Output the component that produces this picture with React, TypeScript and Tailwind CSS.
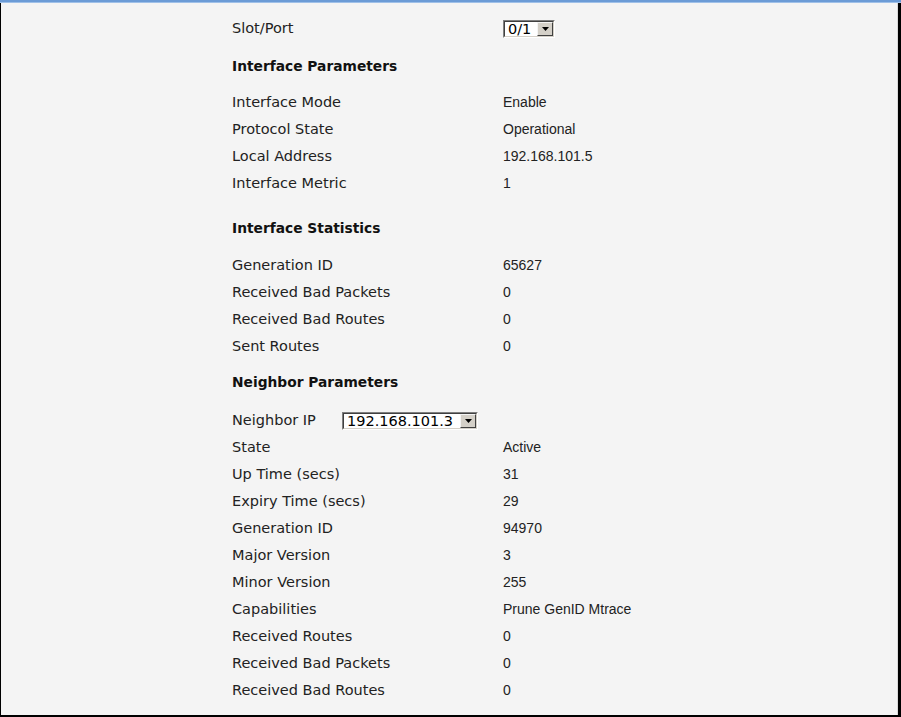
import React from 'react'

const labelFont = { fontFamily: '"DejaVu Sans", Verdana, sans-serif' }
const valueFont = { fontFamily: '"Liberation Sans", Arial, sans-serif' }

function Select({ value, width }: { value: string; width: string }) {
  return (
    <div
      className={`flex h-[18px] items-stretch border-t border-l border-[#7f7f7f] border-b border-r border-b-white border-r-white ${width}`}
    >
      <div className="flex flex-1 items-stretch border-t border-l border-[#404040] border-b border-r border-b-[#d4d0c8] border-r-[#d4d0c8] bg-white">
        <span className="flex-1 pl-[3px] text-[14.5px] leading-[15px] text-black" style={labelFont}>
          {value}
        </span>
        <span className="flex w-[16px] items-center justify-center border-t border-l border-[#f4f4f4] border-b border-r border-b-[#404040] border-r-[#404040] bg-[#d4d0c8]">
          <svg width="7" height="4" viewBox="0 0 7 4">
            <path d="M0 0h7L3.5 4z" fill="#000" />
          </svg>
        </span>
      </div>
    </div>
  )
}

function Row({ label, value }: { label: string; value: React.ReactNode }) {
  return (
    <div className="grid h-[27px] grid-cols-[271px_1fr] items-center">
      <span className="text-[14.5px] text-[#222]" style={labelFont}>
        {label}
      </span>
      <span className="text-[14px] text-[#222]" style={valueFont}>
        {value}
      </span>
    </div>
  )
}

function Heading({ children, className }: { children: string; className: string }) {
  return (
    <div className={`flex h-[27px] items-center text-[13.8px] font-bold text-[#111] ${className}`} style={labelFont}>
      {children}
    </div>
  )
}

const interfaceParams = [
  ['Interface Mode', 'Enable'],
  ['Protocol State', 'Operational'],
  ['Local Address', '192.168.101.5'],
  ['Interface Metric', '1'],
]

const interfaceStats = [
  ['Generation ID', '65627'],
  ['Received Bad Packets', '0'],
  ['Received Bad Routes', '0'],
  ['Sent Routes', '0'],
]

const neighborParams = [
  ['State', 'Active'],
  ['Up Time (secs)', '31'],
  ['Expiry Time (secs)', '29'],
  ['Generation ID', '94970'],
  ['Major Version', '3'],
  ['Minor Version', '255'],
  ['Capabilities', 'Prune GenID Mtrace'],
  ['Received Routes', '0'],
  ['Received Bad Packets', '0'],
  ['Received Bad Routes', '0'],
]

export default function App() {
  return (
    <div className="flex h-[717px] w-[901px] flex-col bg-[#f4f4f4]">
      <div className="h-[3px] bg-[#6b9bd6] border-b border-[#9fc0e8]" />
      <div className="flex flex-1 border-l border-b-2 border-r-[3px] border-black">
        <div className="flex-1 border-r border-[#d9d9d9] pl-[231px] pt-[12px]">
          <div className="grid h-[27px] grid-cols-[271px_1fr] items-center">
            <span className="text-[14.5px] text-[#222]" style={labelFont}>
              Slot/Port
            </span>
            <Select value="0/1" width="w-[52px]" />
          </div>

          <Heading className="mt-[11px]">Interface Parameters</Heading>
          <div className="mt-[9px]">
            {interfaceParams.map(([l, v]) => (
              <Row key={l} label={l} value={v} />
            ))}
          </div>

          <Heading className="mt-[18px]">Interface Statistics</Heading>
          <div className="mt-[10px]">
            {interfaceStats.map(([l, v]) => (
              <Row key={l} label={l} value={v} />
            ))}
          </div>

          <Heading className="mt-[9px]">Neighbor Parameters</Heading>
          <div className="mt-[11px] flex h-[27px] items-center">
            <span className="w-[110px] text-[14.5px] text-[#222]" style={labelFont}>
              Neighbor IP
            </span>
            <Select value="192.168.101.3" width="w-[136px]" />
          </div>
          <div>
            {neighborParams.map(([l, v], i) => (
              <Row key={l + i} label={l} value={v} />
            ))}
          </div>
        </div>
      </div>
    </div>
  )
}
